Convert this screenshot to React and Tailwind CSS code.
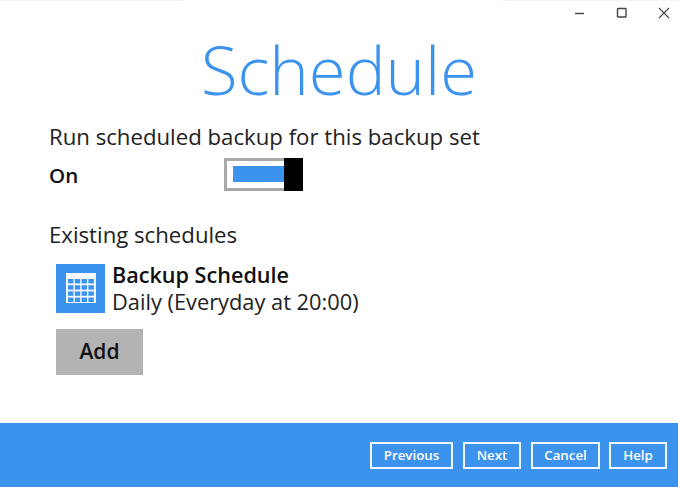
import { useState } from 'react';

const FONT = "font-['Open_Sans',sans-serif]";

function CalendarIcon() {
  return (
    <div className="w-[49px] h-[49px] bg-[#3b93ee] flex items-center justify-center">
      <svg width="30" height="30" viewBox="0 0 30 30">
        <rect x="0" y="0" width="30" height="30" fill="#f4f8fd" />
        {[0, 1, 2, 3].map((r) =>
          [0, 1, 2, 3].map((c) => (
            <rect key={`${r}-${c}`} x={2 + c * 6.8} y={6 + r * 6.2} width="5.4" height="4.4" fill="#3b93ee" />
          ))
        )}
      </svg>
    </div>
  );
}

function FooterButton({ label, width }) {
  return (
    <button className={`h-[27px] pt-px ${width} border-2 border-[#f2f7fd] text-white text-[13.3px] font-semibold leading-none flex items-center justify-center`}>
      {label}
    </button>
  );
}

export default function App() {
  const [on] = useState(true);

  return (
    <div className={`${FONT} w-[678px] h-[487px] bg-white flex flex-col text-[#222] overflow-hidden`}>
      {/* top edge */}
      <div className="h-px flex justify-between shrink-0">
        <div className="w-[184px] bg-[#eef5fc]" />
        <div className="w-[176px] bg-[#eef5fc]" />
      </div>

      {/* window controls */}
      <div className="h-[23px] flex justify-end items-center gap-[30px] pr-[8px] shrink-0">
        <svg width="12" height="12" viewBox="0 0 12 12" className="text-[#444]">
          <path d="M1 6.5h9" stroke="currentColor" strokeWidth="1.4" />
        </svg>
        <svg width="12" height="12" viewBox="0 0 12 12" className="text-[#444]">
          <rect x="1.5" y="1.5" width="8.5" height="8.5" rx="0.5" fill="none" stroke="currentColor" strokeWidth="1.4" />
        </svg>
        <svg width="12" height="12" viewBox="0 0 12 12" className="text-[#444]">
          <path d="M1 1l10 10M11 1L1 11" stroke="currentColor" strokeWidth="1.1" fill="none" />
        </svg>
      </div>

      {/* content */}
      <div className="flex-1 flex flex-col">
        <h1 className="text-[67px] leading-[92px] font-light text-[#3b93ee] text-center mt-[-1px]">Schedule</h1>

        <div className="pl-[49px] mt-[8px]">
          <p className="text-[22.2px] leading-[28px]">Run scheduled backup for this backup set</p>

          <div className="flex items-center mt-[6px] h-[34px]">
            <span className="w-[175px] pt-[3px] text-[20.5px] font-semibold text-[#111]">{on ? 'On' : 'Off'}</span>
            <div className="w-[79px] h-[33px] border-[3px] border-[#a9a9a9] flex items-center pl-[6px] relative">
              <div className="w-[52px] h-[16px] bg-[#3b93ee]" />
              <div className="absolute right-[-3px] top-[-3px] w-[19px] h-[33px] bg-black" />
            </div>
          </div>

          <p className="text-[22.2px] leading-[28px] mt-[30px]">Existing schedules</p>

          <div className="flex items-center gap-[8px] mt-[12px] ml-[7px]">
            <CalendarIcon />
            <div className="flex flex-col ml-[-1px]">
              <span className="text-[21.6px] leading-[27px] font-semibold text-[#111]">Backup Schedule</span>
              <span className="text-[21.8px] leading-[27px]">Daily (Everyday at 20:00)</span>
            </div>
          </div>

          <button className="ml-[7px] mt-[14px] w-[87px] h-[46px] bg-[#b3b3b3] text-[21px] font-semibold text-[#111] flex items-center justify-center">
            Add
          </button>
        </div>
      </div>

      {/* footer */}
      <div className="h-[64px] bg-[#3b93ee] flex items-center gap-[10px] pl-[370px] shrink-0">
        <FooterButton label="Previous" width="w-[83px]" />
        <FooterButton label="Next" width="w-[58px]" />
        <FooterButton label="Cancel" width="w-[69px]" />
        <div className="ml-[-1px]">
          <FooterButton label="Help" width="w-[58px]" />
        </div>
      </div>
    </div>
  );
}
